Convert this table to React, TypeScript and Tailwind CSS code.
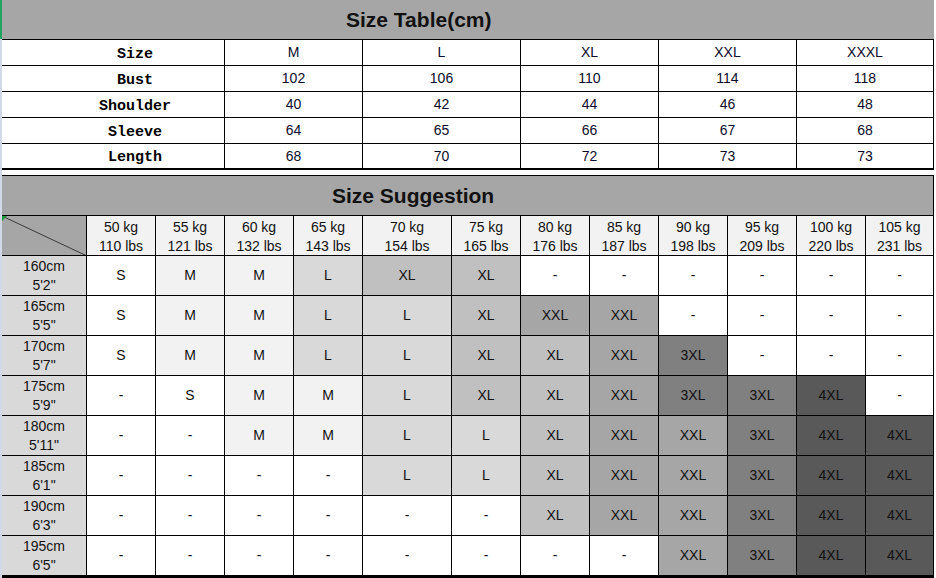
const sans = "font-['Liberation_Sans',Arial,sans-serif]";

const topRows: { label: string; values: string[] }[] = [
  { label: "Size", values: ["M", "L", "XL", "XXL", "XXXL"] },
  { label: "Bust", values: ["102", "106", "110", "114", "118"] },
  { label: "Shoulder", values: ["40", "42", "44", "46", "48"] },
  { label: "Sleeve", values: ["64", "65", "66", "67", "68"] },
  { label: "Length", values: ["68", "70", "72", "73", "73"] },
];

const weights = [
  ["50 kg", "110 lbs"],
  ["55 kg", "121 lbs"],
  ["60 kg", "132 lbs"],
  ["65 kg", "143 lbs"],
  ["70 kg", "154 lbs"],
  ["75 kg", "165 lbs"],
  ["80 kg", "176 lbs"],
  ["85 kg", "187 lbs"],
  ["90 kg", "198 lbs"],
  ["95 kg", "209 lbs"],
  ["100 kg", "220 lbs"],
  ["105 kg", "231 lbs"],
];

const heights: { cm: string; ft: string; sizes: string[] }[] = [
  { cm: "160cm", ft: "5'2\"", sizes: ["S", "M", "M", "L", "XL", "XL", "-", "-", "-", "-", "-", "-"] },
  { cm: "165cm", ft: "5'5\"", sizes: ["S", "M", "M", "L", "L", "XL", "XXL", "XXL", "-", "-", "-", "-"] },
  { cm: "170cm", ft: "5'7\"", sizes: ["S", "M", "M", "L", "L", "XL", "XL", "XXL", "3XL", "-", "-", "-"] },
  { cm: "175cm", ft: "5'9\"", sizes: ["-", "S", "M", "M", "L", "XL", "XL", "XXL", "3XL", "3XL", "4XL", "-"] },
  { cm: "180cm", ft: "5'11\"", sizes: ["-", "-", "M", "M", "L", "L", "XL", "XXL", "XXL", "3XL", "4XL", "4XL"] },
  { cm: "185cm", ft: "6'1\"", sizes: ["-", "-", "-", "-", "L", "L", "XL", "XXL", "XXL", "3XL", "4XL", "4XL"] },
  { cm: "190cm", ft: "6'3\"", sizes: ["-", "-", "-", "-", "-", "-", "XL", "XXL", "XXL", "3XL", "4XL", "4XL"] },
  { cm: "195cm", ft: "6'5\"", sizes: ["-", "-", "-", "-", "-", "-", "-", "-", "XXL", "3XL", "4XL", "4XL"] },
];

const sizeBg: Record<string, string> = {
  "-": "bg-white",
  S: "bg-white",
  M: "bg-[#f2f2f2]",
  L: "bg-[#d9d9d9]",
  XL: "bg-[#c0c0c0]",
  XXL: "bg-[#a6a6a6]",
  "3XL": "bg-[#808080]",
  "4XL": "bg-[#595959]",
};

const gridCols =
  "grid grid-cols-[85px_69px_69px_69px_69px_89px_69px_69px_69px_69px_69px_69px_68px]";

function SizeTable() {
  return (
    <div className="w-[932px]">
      <div className="h-[39px] bg-[#a6a6a6] flex items-center pl-[344px]">
        <span className={`${sans} text-[21px] font-bold text-[#111]`}>Size Table(cm)</span>
      </div>
      <div className="border-t border-black">
        {topRows.map((row, i) => (
          <div
            key={row.label}
            className="grid grid-cols-[223px_138px_158px_138px_138px_137px]"
          >
            <div
              className={`h-[26px] border-r border-black flex items-center justify-center pl-[44px] pt-[5px] font-['Liberation_Mono','Courier_New',monospace] font-bold text-[15px] text-black ${
                i === topRows.length - 1 ? "border-b-2" : "border-b"
              }`}
            >
              {row.label}
            </div>
            {row.values.map((v, j) => (
              <div
                key={j}
                className={`h-[26px] border-r border-black flex items-center justify-center ${sans} text-[14px] text-[#0c0c2a] ${
                  i === topRows.length - 1 ? "border-b-2" : "border-b"
                }`}
              >
                {v}
              </div>
            ))}
          </div>
        ))}
      </div>
    </div>
  );
}

function Suggestion() {
  return (
    <div className="w-[932px] mt-[5px]">
      <div className="h-[41px] bg-[#a6a6a6] border-t border-b border-r border-black flex items-center pl-[330px]">
        <span className={`${sans} text-[21px] font-bold text-[#111]`}>Size Suggestion</span>
      </div>
      <div className={gridCols}>
        <div className="relative h-[40px] bg-[#a6a6a6] border-r border-b border-black overflow-hidden">
          <svg className="absolute inset-0" width="85" height="40" viewBox="0 0 85 40">
            <line x1="0" y1="0" x2="85" y2="40" stroke="#3a3a3a" strokeWidth="1" />
            <polygon points="0,0 5,0 0,5" fill="#1a9a3a" />
          </svg>
        </div>
        {weights.map(([kg, lbs]) => (
          <div
            key={kg}
            className={`h-[40px] bg-[#f2f2f2] border-r border-b border-black flex flex-col items-center justify-center pt-[2px] ${sans} text-[14px] leading-[19px] text-[#111]`}
          >
            <span>{kg}</span>
            <span>{lbs}</span>
          </div>
        ))}
      </div>
      {heights.map((row, i) => {
        const last = i === heights.length - 1;
        return (
          <div key={row.cm} className={gridCols}>
            <div
              className={`bg-[#d9d9d9] border-r border-black flex flex-col items-center justify-center ${sans} text-[14px] leading-[19px] text-[#111] ${
                last ? "h-[42px] border-b-[3px]" : "h-[40px] border-b"
              }`}
            >
              <span>{row.cm}</span>
              <span>{row.ft}</span>
            </div>
            {row.sizes.map((s, j) => (
              <div
                key={j}
                className={`${sizeBg[s]} border-r border-black flex items-center justify-center ${sans} text-[14px] text-[#111] ${
                  last ? "h-[42px] border-b-[3px]" : "h-[40px] border-b"
                }`}
              >
                {s}
              </div>
            ))}
          </div>
        );
      })}
    </div>
  );
}

export default function App() {
  return (
    <main className="w-[936px] h-[578px] bg-white flex overflow-hidden">
      <div className="w-[2px] flex flex-col">
        <div className="h-[39px] bg-[#21a366]" />
        <div className="flex-1 bg-[#d3d9e4]" />
      </div>
      <div className="flex flex-col">
        <SizeTable />
        <Suggestion />
      </div>
    </main>
  );
}
